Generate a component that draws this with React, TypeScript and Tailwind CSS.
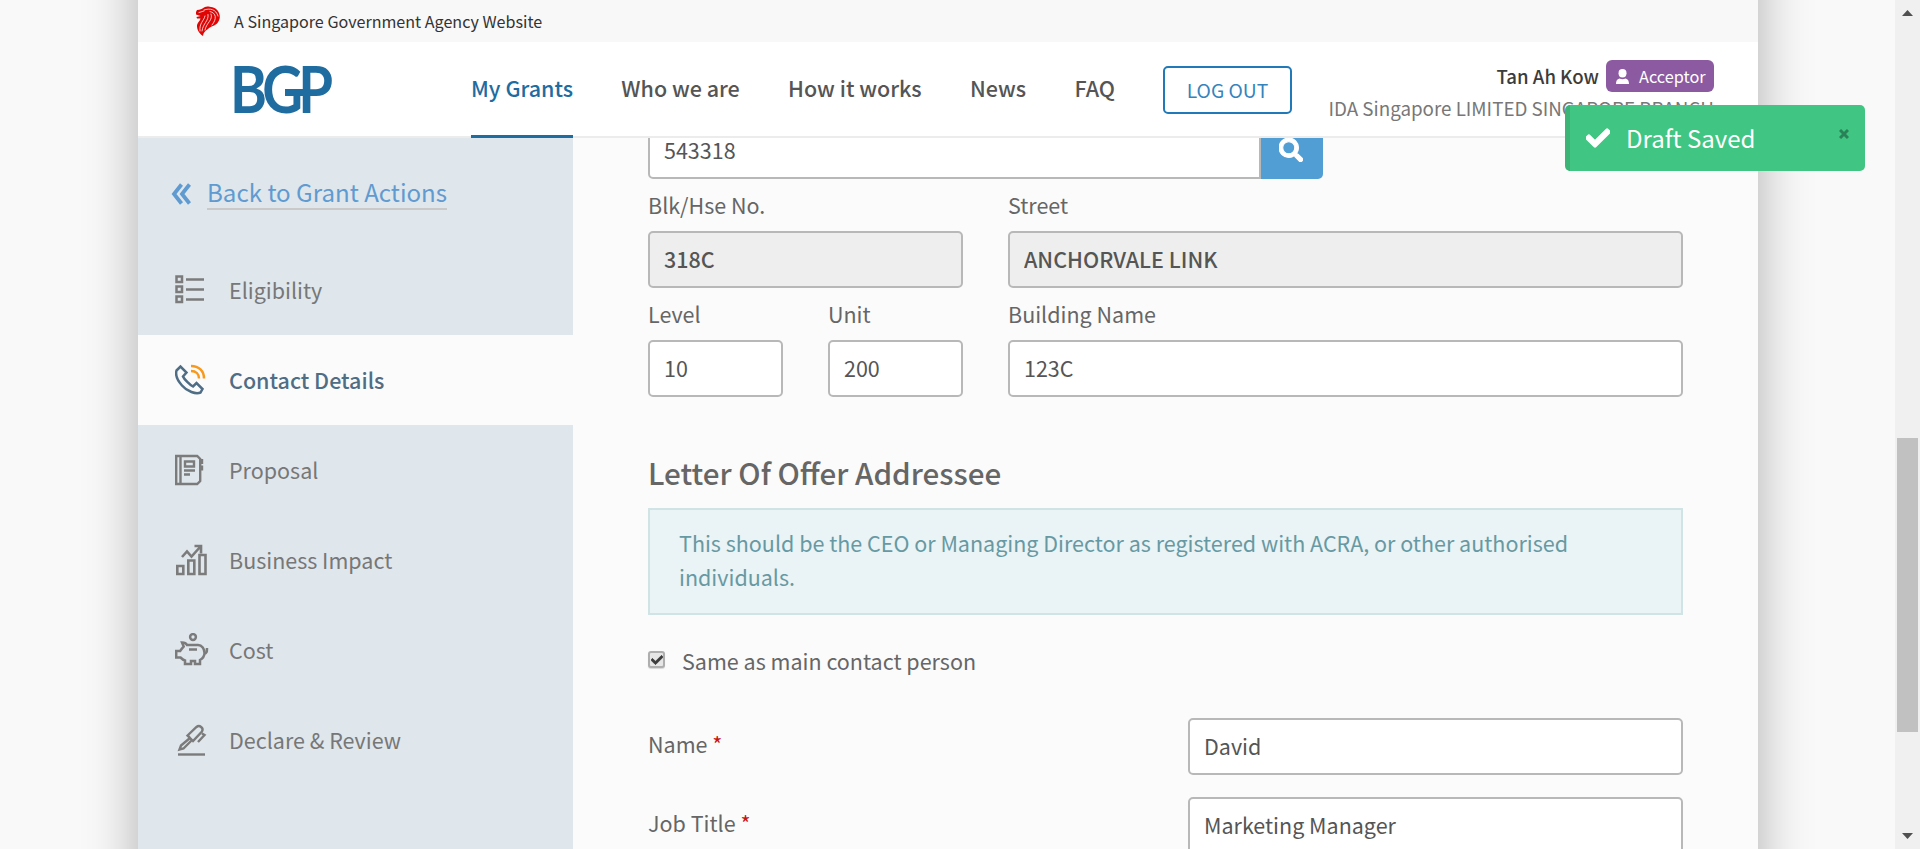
import React from "react";
import { FaCheck, FaSearch } from "react-icons/fa";

function LionIcon() {
  return (
    <svg width="26" height="31" viewBox="0 0 26 31" className="shrink-0">
      <path
        d="M1 6 L2 4 C5 4 7 3 9 1.500 C11 .5 14 0 16 1 C20 1.500 23 4 24 7 C25.500 10 25 14 22.500 17 C20 20 16 20 13 23 C10 25 8 27 8 30 C5 28 1.500 24 2 19 C3 16 5 15 5.500 12.500 L2 12.500 L1.500 11 L5.500 10 L1 8.500 Z"
        fill="#e00505"
      />
      <g fill="none" stroke="#f8f8f8" strokeWidth="0.8" strokeLinecap="round">
        <path d="M10 10 C9 15 4 17 5 25" />
        <path d="M13 8.500 C14 15 8 17 7 25" />
        <path d="M16 8 C18.500 14 11 17 10 24" />
        <path d="M15 5.500 C21.500 7 22 13 17 19" />
        <path d="M4 6.500 L9 5 M9 4 C15 2 21 3 23 10" />
      </g>
    </svg>
  );
}

function DoubleChevron() {
  return (
    <svg width="21" height="22" viewBox="0 0 21 22" fill="none" stroke="currentColor" strokeWidth="3.800" className="mt-[12px] mr-[15px] shrink-0">
      <path d="M10.500 1.500L3 11l7.500 9.500M18.500 1.500L11 11l7.500 9.500" />
    </svg>
  );
}

function ListIcon() {
  return (
    <svg width="34" height="34" viewBox="0 0 34 34" fill="none" stroke="#7b7b7b" strokeWidth="2.500">
      <path d="M1.500 3.500h5.500v5.500h-5.500zM1.500 13.500h5.500v5.500h-5.500zM1.500 23.500h5.500v5.500h-5.500z" />
      <path d="M11 6.500h18M11 16.500h18M11 26.500h18" />
    </svg>
  );
}

function PhoneIcon() {
  return (
    <svg width="34" height="34" viewBox="0 0 34 34" fill="none" strokeWidth="2.500">
      <path
        d="M1.500 7.500L5.500 3.500 L11.500 9.500 L8 13.500 C9 16 15 22 18 23.500 L21.500 20 L27.500 26 L25.500 29.500 C21 31.500 12 28.500 7 22.500 C2 17 .5 11 1.500 7.500 Z"
        stroke="#4f6d85"
      />
      <path d="M16 3C24 3 29 8 29 15.500M16 8C21 8 24 11 24 15.500" stroke="#f7991c" />
    </svg>
  );
}

function BookIcon() {
  return (
    <svg width="34" height="34" viewBox="0 0 34 34" fill="none" stroke="#7b7b7b" strokeWidth="2.400">
      <path d="M1.200 3h21l3 3v22l-3 3h-21zM5.500 3v28" />
      <path d="M10 8.500h9v5h-9zM9 17.500h11M9 21.500h6" />
      <path d="M26.500 6v5M26.500 12.500v5" strokeWidth="3.400" />
    </svg>
  );
}

function ChartIcon() {
  return (
    <svg width="34" height="34" viewBox="0 0 34 34" fill="none" stroke="#7b7b7b" strokeWidth="2.600">
      <path d="M2.300 23h6v8h-6zM13.300 17.500h6v13.500h-6zM24.500 12h6v19h-6z" />
      <path d="M7 14l5-5.500 4.500 5 9-10M19.500 3h6.500v7.500" />
    </svg>
  );
}

function PiggyIcon() {
  return (
    <svg width="35" height="34" viewBox="0 0 35 34" fill="none" stroke="#7b7b7b" strokeWidth="2.500" className="block">
      <circle cx="18" cy="4" r="2.900" />
      <path d="M12 12h11c4 0 6.500 4 6.500 8 0 3-2 5.500-4.500 7v4h-5v-3h-4v3h-6v-3.500C8 27 6 25 5.500 24.500H1.200v-6.500h4c1-2 2.500-3 3.500-4.500L7 9.500c2 0 4 .5 5 2.500z" />
      <path d="M14 16.500h8M29 20.500c3 0 3-2 3-5.500" />
    </svg>
  );
}

function PenIcon() {
  return (
    <svg width="34" height="34" viewBox="0 0 34 34" fill="none" stroke="#7b7b7b" strokeWidth="2.400">
      <path d="M12.500 12.500l9-8.500c3-2.500 7.500 1 5.500 4.500l-9 9.500zM13 12.500l2 2.500-9 7.500-1.500 4 4-1 8.500-8.500" />
      <path d="M27 10.500l2.500 1.500-6.500 7" />
      <path d="M3 31.500h27" />
    </svg>
  );
}

const steps = [
  { label: "Eligibility", icon: <ListIcon /> },
  { label: "Contact Details", icon: <PhoneIcon />, active: true },
  { label: "Proposal", icon: <BookIcon /> },
  { label: "Business Impact", icon: <ChartIcon /> },
  { label: "Cost", icon: <PiggyIcon /> },
  { label: "Declare & Review", icon: <PenIcon /> },
];

const links = ["My Grants", "Who we are", "How it works", "News", "FAQ"];

function Field({ value, disabled = false }: { value: string; disabled?: boolean }) {
  return (
    <input
      defaultValue={value}
      disabled={disabled}
      className="block h-[57px] w-full rounded-[5px] border-2 border-[#b8b8b8] bg-white px-[14px] pb-[2px] text-[21.5px] text-[#555] disabled:bg-[#eee] disabled:font-medium"
    />
  );
}

function Labelled({ label, value, disabled, className }: { label: string; value: string; disabled?: boolean; className: string }) {
  return (
    <label className={className}>
      <span className="block h-[52px] leading-[51px]">{label}</span>
      <Field value={value} disabled={disabled} />
    </label>
  );
}

function Row({ label, value }: { label: string; value: string }) {
  return (
    <div className="flex h-[79px] items-start justify-between">
      <span className="leading-[51px]">
        {label} <span className="text-[#c81414]">*</span>
      </span>
      <div className="w-[495px]">
        <Field value={value} />
      </div>
    </div>
  );
}

export default function App() {
  return (
    <div className="relative flex h-[849px] w-[1920px] overflow-hidden bg-[#f9f9f9] font-['Noto_Sans_CJK_SC','Noto_Sans',sans-serif] text-[21.5px] text-[#666]">
      <div className="-my-[100px] flex flex-1 justify-center pl-[1px]">
        <div className="flex w-[1620px] flex-col bg-[#fbfbfb] py-[100px] shadow-[0_0_50px_rgba(0,0,0,0.3)]">
          <div className="flex h-[42px] shrink-0 items-center bg-[#f8f8f8] pl-[57px]">
            <LionIcon />
            <span className="ml-[13px] text-[16.1px] leading-[40px] text-[#333]">A Singapore Government Agency Website</span>
          </div>

          <header className="flex h-[96px] shrink-0 border-b-2 border-[#ececec] bg-white">
            <div className="relative ml-[92px] flex h-[94px] w-[241px] items-center font-['Lato',sans-serif] text-[65px] font-bold text-[#1f6ca1]">
              <span className="inline-block origin-left scale-x-[0.865] tracking-[-5.5px]">BGP</span>
              <span className="absolute top-[47px] left-[55px] h-[7px] w-[22px] bg-[#1f6ca1]" />
            </div>
            <nav className="flex gap-[48.300px] font-medium text-[#555]">
              {links.map((l, i) => (
                <a
                  key={l}
                  className={
                    i === 0
                      ? "h-[96px] border-b-[3px] border-[#1f6ca1] leading-[91px] whitespace-nowrap text-[#1f6ca1]"
                      : "h-[96px] leading-[91px] whitespace-nowrap"
                  }
                >
                  {l}
                </a>
              ))}
            </nav>
            <button className="mt-[24px] ml-[48px] h-[48px] w-[129px] shrink-0 rounded-[5px] border-2 border-[#2279b8] text-[19.3px] leading-[43px] text-[#3583bd]">
              LOG OUT
            </button>
            <div className="ml-auto flex flex-col items-end pt-[18px] pr-[44px]">
              <div className="flex items-center gap-[7px]">
                <span className="text-[18.6px] leading-[32px] font-medium text-[#3c3c3c]">Tan Ah Kow</span>
                <span className="flex h-[32px] w-[108px] items-center gap-[10px] rounded-[6px] bg-[#8c5aa1] pl-[10px] text-[16.3px] leading-[32px] text-white">
                  <svg width="13" height="15" viewBox="0 0 13 15" fill="#fff">
                    <ellipse cx="6.500" cy="4.200" rx="4" ry="4.200" />
                    <path d="M0 15c0-3 1-5 3.500-5.500 2 1 4 1 6 0C12 10 13 12 13 15z" />
                  </svg>
                  Acceptor
                </span>
              </div>
              <span className="text-[18.8px] leading-[32px] whitespace-nowrap text-[#777]">IDA Singapore LIMITED SINGAPORE BRANCH</span>
            </div>
          </header>

          <div className="flex min-h-0 flex-1">
            <aside className="w-[435px] shrink-0 bg-[#dfe6ec] text-[#777]">
              <div className="flex h-[107px] items-start pt-[33px] pl-[33px] text-[#5f9bd0]">
                <DoubleChevron />
                <span className="h-[39px] border-b-2 border-[#c9c9c9] text-[24.1px] leading-[41px] whitespace-nowrap">Back to Grant Actions</span>
              </div>
              {steps.map((s) => (
                <div
                  key={s.label}
                  className={
                    s.active
                      ? "flex h-[90px] items-center bg-[#fbfbfb] pl-[37px] font-medium text-[#4f6d85]"
                      : "flex h-[90px] items-center pl-[37px]"
                  }
                >
                  <span className="w-[54px]">{s.icon}</span>
                  <span className="leading-[32px]">{s.label}</span>
                </div>
              ))}
            </aside>

            <main className="min-w-0 flex-1 overflow-hidden pr-[75px] pl-[75px]">
              <div className="-mt-[16px] flex h-[57px] w-[675px]">
                <input
                  defaultValue="543318"
                  className="w-[613px] rounded-l-[5px] border-2 border-[#b8b8b8] bg-white px-[14px] text-[#555]"
                />
                <button className="flex flex-1 items-center justify-center rounded-r-[5px] bg-[#519ed5] pr-[2px] pb-[2px] text-white">
                  <FaSearch className="h-[24px] w-[24px] stroke-current stroke-[22]" />
                </button>
              </div>
              <div className="flex gap-[45px]">
                <Labelled className="w-[315px]" label="Blk/Hse No." value="318C" disabled />
                <Labelled className="flex-1" label="Street" value="ANCHORVALE LINK" disabled />
              </div>
              <div className="flex gap-[45px]">
                <Labelled className="w-[135px]" label="Level" value="10" />
                <Labelled className="w-[135px]" label="Unit" value="200" />
                <Labelled className="flex-1" label="Building Name" value="123C" />
              </div>
              <h2 className="mt-[51px] h-[60px] text-[29.600px] leading-[50px] font-medium">Letter Of Offer Addressee</h2>
              <div className="h-[107px] border-2 border-[#d0e4e6] bg-[#eaf3f5] px-[29px] pt-[16px] leading-[34px] text-[#6799a3]">
                This should be the CEO or Managing Director as registered with ACRA, or other authorised individuals.
              </div>
              <div className="mt-[29px] flex h-[74px] items-start">
                <span className="mt-[7px] mr-[17px] flex h-[17px] w-[17px] items-center justify-center rounded-[3px] border-2 border-[#aeaeae] bg-[#e6e6e6] shadow-[0_1px_1px_rgba(0,0,0,0.15)]">
                  <FaCheck className="h-[12px] w-[12px] shrink-0 stroke-current stroke-[30] text-[#3c3c3c]" />
                </span>
                <span className="leading-[34px]">Same as main contact person</span>
              </div>
              <Row label="Name" value="David" />
              <Row label="Job Title" value="Marketing Manager" />
            </main>
          </div>
        </div>
      </div>

      <div className="flex w-[25px] shrink-0 flex-col items-center bg-[#f0f0f0]">
        <svg width="11" height="6" viewBox="0 0 11 6" className="mt-[10px]">
          <path d="M0 6L5.500 0 11 6z" fill="#505050" />
        </svg>
        <div className="mt-[422px] h-[294px] w-[21px] bg-[#c1c1c1]" />
        <svg width="11" height="6" viewBox="0 0 11 6" className="mt-auto mb-[10px]">
          <path d="M0 0L5.500 6 11 0z" fill="#505050" />
        </svg>
      </div>

      <div className="absolute top-[105px] left-[1565px] flex h-[66px] w-[300px] items-center overflow-hidden rounded-[5px] border-l-[5px] border-[#3bb476] bg-[#40c582] pl-[16px] text-white">
        <FaCheck className="h-[24px] w-[24px] stroke-current stroke-[30]" />
        <span className="ml-[16px] text-[24px] leading-[60px]">Draft Saved</span>
        <svg width="10" height="10" viewBox="0 0 10 10" className="mt-[-8px] mr-[16px] ml-auto" stroke="#2b8157" strokeWidth="3">
          <path d="M1 1l8 8M9 1l-8 8" />
        </svg>
      </div>
    </div>
  );
}
